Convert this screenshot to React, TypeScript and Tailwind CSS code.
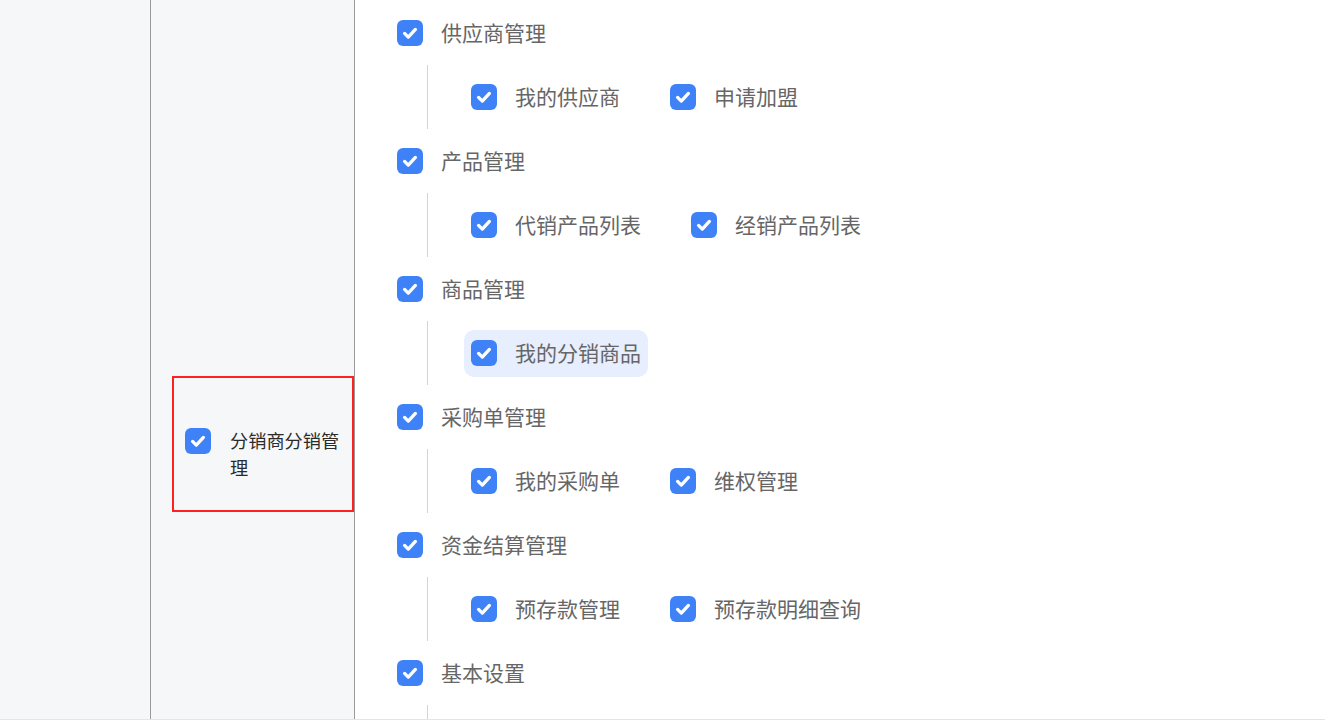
import React from "react";

const FONT = { fontFamily: '"Noto Sans CJK SC", "Noto Sans", sans-serif' };

function Box() {
  return (
    <span className="flex h-[26px] w-[26px] shrink-0 items-center justify-center rounded-[6px] bg-[#3f82f7]">
      <svg width="26" height="26" viewBox="0 0 26 26">
        <polyline
          points="7.6,13.4 11.3,17.1 18.4,9.4"
          fill="none"
          stroke="#fff"
          strokeWidth="3.3"
          strokeLinecap="round"
          strokeLinejoin="round"
        />
      </svg>
    </span>
  );
}

type Group = { title: string; items: string[]; hl?: number };

const groups: Group[] = [
  { title: "供应商管理", items: ["我的供应商", "申请加盟"] },
  { title: "产品管理", items: ["代销产品列表", "经销产品列表"] },
  { title: "商品管理", items: ["我的分销商品"], hl: 0 },
  { title: "采购单管理", items: ["我的采购单", "维权管理"] },
  { title: "资金结算管理", items: ["预存款管理", "预存款明细查询"] },
  { title: "基本设置", items: [] },
];

export default function App() {
  return (
    <div className="h-[728px] w-[1325px] overflow-hidden bg-white" style={FONT}>
      <div className="flex h-[720px] overflow-hidden border-b border-[#e3e5ea]">
        <div className="w-[151px] shrink-0 border-r border-[#9b9b9b] bg-[#f6f7f9]" />
        <div className="w-[204px] shrink-0 border-r border-[#9b9b9b] bg-[#f6f7f9] pl-[21px] pt-[376px]">
          <div className="flex h-[136px] w-[182px] items-start border-2 border-[#ff2020] pl-[11px] pt-[50px]">
            <Box />
            <span className="ml-[19px] mt-[-1.5px] w-[112px] text-[18.2px] leading-[27px] text-[#2a2a2a]">
              分销商分销管理
            </span>
          </div>
        </div>
        <div className="flex-1 pt-[1px]">
          {groups.map((g) => (
            <div key={g.title}>
              <div className="flex h-[64px] items-center pl-[42px]">
                <Box />
                <span className="ml-[18px] mt-[-1px] text-[21px] text-[#666]">{g.title}</span>
              </div>
              <div className="flex h-[64px] items-center pl-[72px]">
                <div className="h-[64px] w-[1px] bg-[#d4d4d4]" />
                <div className="ml-[36px] flex items-center gap-[36px]">
                  {g.items.map((it, i) => (
                    <div
                      key={it}
                      className={
                        i === g.hl
                          ? "flex h-[47px] items-center rounded-[10px] bg-[#e7eefd] px-[7px]"
                          : "flex h-[47px] items-center px-[7px]"
                      }
                    >
                      <Box />
                      <span className="ml-[18px] text-[21px] text-[#666]">{it}</span>
                    </div>
                  ))}
                </div>
              </div>
            </div>
          ))}
        </div>
      </div>
    </div>
  );
}
